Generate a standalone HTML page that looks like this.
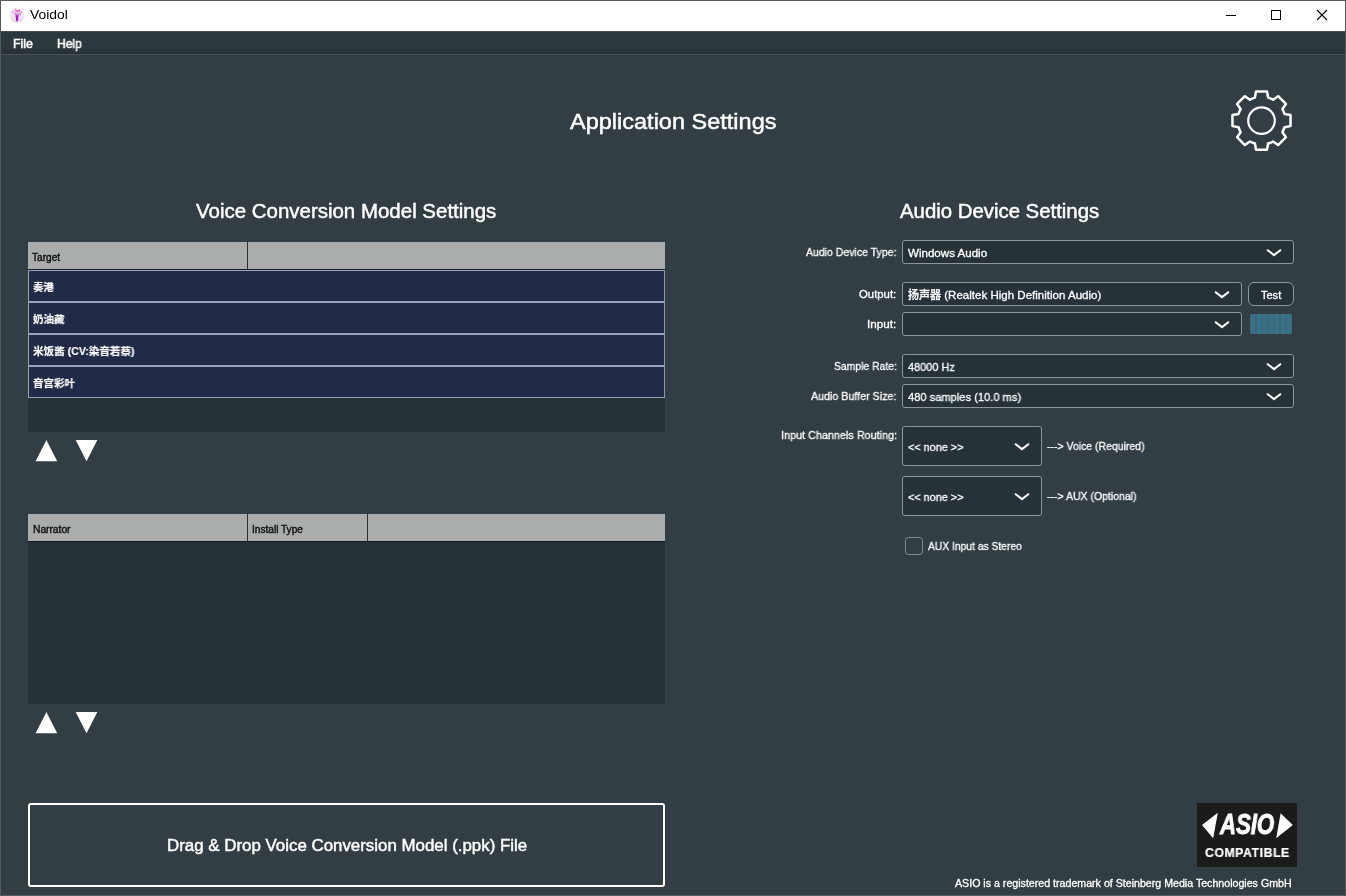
<!DOCTYPE html>
<html lang="zh"><head><meta charset="utf-8"><title>Voidol</title>
<style>
html,body{margin:0;padding:0}
body{width:1346px;height:896px;overflow:hidden;position:relative;background:#323e44;font-family:"Liberation Sans", "Noto Sans CJK SC", sans-serif;color:#fff}
.a{position:absolute;display:block}
.t{position:absolute;white-space:nowrap;line-height:1;transform-origin:0 50%;color:#fff;will-change:transform;-webkit-text-stroke:0.3px}
.combo{position:absolute;background:#263238;border:1px solid #8e989b;border-radius:3px}
.row{position:absolute;left:29px;width:635px;height:30px;background:#212a47}
.hdr{position:absolute;left:28px;width:637px;height:27px;background:#a9adad;border-bottom:1px solid #161c20}
.sep{position:absolute;width:1px;height:27px;background:#2a3236}
</style></head>
<body>
<div class="a" style="left:0;top:0;width:1346px;height:31px;background:#fff"></div>
<svg class="a" style="left:6px;top:5px" width="22" height="22" viewBox="6 5 22 22">
<defs><linearGradient id="ig" x1="0" y1="0" x2="0" y2="1"><stop offset="0" stop-color="#fdf3fc"/><stop offset="0.55" stop-color="#f1e6f1"/><stop offset="1" stop-color="#dededb"/></linearGradient></defs>
<circle cx="16.7" cy="15.3" r="7.7" fill="url(#ig)"/>
<ellipse cx="17" cy="12.2" rx="4.6" ry="3" fill="#f5b9ee" opacity="0.75"/>
<path d="M13.6 12.6 Q16.8 14.6 20.2 12.6 L18.6 15.6 L18 21 L16 21 L15.4 15.6 Z" fill="#c77be3" opacity="0.8"/>
<path d="M15.7 15.2 L18.3 15.2 L17.9 21.2 L16.2 21.2 Z" fill="#a117d8"/>
<rect x="15.8" y="10.6" width="3.6" height="1" fill="#d63db2"/>
<circle cx="15.2" cy="9.3" r="0.55" fill="#7b4a86"/><circle cx="19.6" cy="10.4" r="0.55" fill="#7b4a86"/><circle cx="21.5" cy="12.3" r="0.55" fill="#7b4a86"/><circle cx="12.4" cy="11.8" r="0.5" fill="#8d6a96"/><circle cx="20.6" cy="14.2" r="0.5" fill="#8d5a86"/>
</svg>
<svg class="a" style="left:1216px;top:5px" width="120" height="22" viewBox="0 0 120 22">
<path d="M10 10.5 H20" stroke="#000" stroke-width="1"/>
<rect x="55.5" y="5.5" width="9" height="9" fill="none" stroke="#000" stroke-width="1"/>
<path d="M101 5 L111 15 M111 5 L101 15" stroke="#000" stroke-width="1.1"/>
</svg>
<div class="a" style="left:0;top:31px;width:1346px;height:24px;background:linear-gradient(#2d383e 0,#2d383e 70%,#293338 80%,#283237 100%);box-shadow:inset 0 -1px 0 #475359,inset 0 1px 0 #424d53"></div>
<svg class="a" style="left:1221px;top:80px" width="82" height="82" viewBox="1221 80 82 82"><path d="M1254.90 97.63 L1255.99 91.57 L1267.01 91.57 L1268.10 97.63 A23.90 23.90 0 0 1 1273.08 99.69 L1278.13 96.17 L1285.93 103.97 L1282.41 109.02 A23.90 23.90 0 0 1 1284.47 114.00 L1290.53 115.09 L1290.53 126.11 L1284.47 127.20 A23.90 23.90 0 0 1 1282.41 132.18 L1285.93 137.23 L1278.13 145.03 L1273.08 141.51 A23.90 23.90 0 0 1 1268.10 143.57 L1267.01 149.63 L1255.99 149.63 L1254.90 143.57 A23.90 23.90 0 0 1 1249.92 141.51 L1244.87 145.03 L1237.07 137.23 L1240.59 132.18 A23.90 23.90 0 0 1 1238.53 127.20 L1232.47 126.11 L1232.47 115.09 L1238.53 114.00 A23.90 23.90 0 0 1 1240.59 109.02 L1237.07 103.97 L1244.87 96.17 L1249.92 99.69 A23.90 23.90 0 0 1 1254.90 97.63 Z" fill="none" stroke="#fff" stroke-width="2.5" stroke-linejoin="round"/><circle cx="1261.5" cy="120.6" r="13.3" fill="none" stroke="#fff" stroke-width="2.2"/></svg>
<div class="a" style="left:28px;top:242px;width:637px;height:190px;background:#263238"></div>
<div class="hdr" style="top:242px"></div><div class="sep" style="left:247px;top:242px"></div>
<div class="a" style="left:28px;top:270px;width:635px;height:127px;background:#9da1be;border-left:1px solid #98a1b2;border-right:1px solid #8f9aa0;border-bottom:1px solid #97a1b0"></div>
<div class="row" style="top:271px;height:30px"></div>
<div class="row" style="top:303px;height:30px"></div>
<div class="row" style="top:335px;height:30px"></div>
<div class="row" style="top:367px;height:30px"></div>
<svg class="a" style="left:30px;top:436px" width="74" height="30" viewBox="30 436 74 30"><path d="M46.4 440.0 L57.2 461.3 L35.6 461.3 Z M75.7 440.0 L97.3 440.0 L86.5 461.3 Z" fill="#fff"/></svg>
<div class="a" style="left:28px;top:514px;width:637px;height:190px;background:#263238"></div>
<div class="hdr" style="top:514px"></div><div class="sep" style="left:247px;top:514px"></div><div class="sep" style="left:367px;top:514px"></div>
<svg class="a" style="left:30px;top:708px" width="74" height="30" viewBox="30 708 74 30"><path d="M46.4 712.0 L57.2 733.3 L35.6 733.3 Z M75.7 712.0 L97.3 712.0 L86.5 733.3 Z" fill="#fff"/></svg>
<div class="a" style="left:28px;top:803px;width:633px;height:80px;border:2px solid #fff;border-radius:3px"></div>
<div class="combo" style="left:902px;top:240px;width:390px;height:22px"></div><svg class="a" style="left:1264.0px;top:246.6px" width="20" height="12" viewBox="0 0 20 12"><path d="M3.7 3.2 L10 8.1 L16.3 3.2" fill="none" stroke="#fff" stroke-width="2" stroke-linecap="round" stroke-linejoin="round"/></svg><div class="combo" style="left:902px;top:282px;width:338px;height:22px"></div><svg class="a" style="left:1212.0px;top:288.6px" width="20" height="12" viewBox="0 0 20 12"><path d="M3.7 3.2 L10 8.1 L16.3 3.2" fill="none" stroke="#fff" stroke-width="2" stroke-linecap="round" stroke-linejoin="round"/></svg><div class="combo" style="left:902px;top:312px;width:338px;height:22px"></div><svg class="a" style="left:1212.0px;top:318.6px" width="20" height="12" viewBox="0 0 20 12"><path d="M3.7 3.2 L10 8.1 L16.3 3.2" fill="none" stroke="#fff" stroke-width="2" stroke-linecap="round" stroke-linejoin="round"/></svg><div class="combo" style="left:902px;top:354px;width:390px;height:22px"></div><svg class="a" style="left:1264.0px;top:360.6px" width="20" height="12" viewBox="0 0 20 12"><path d="M3.7 3.2 L10 8.1 L16.3 3.2" fill="none" stroke="#fff" stroke-width="2" stroke-linecap="round" stroke-linejoin="round"/></svg><div class="combo" style="left:902px;top:384px;width:390px;height:22px"></div><svg class="a" style="left:1264.0px;top:390.6px" width="20" height="12" viewBox="0 0 20 12"><path d="M3.7 3.2 L10 8.1 L16.3 3.2" fill="none" stroke="#fff" stroke-width="2" stroke-linecap="round" stroke-linejoin="round"/></svg><div class="combo" style="left:902px;top:426px;width:138px;height:38px"></div><svg class="a" style="left:1012.0px;top:440.6px" width="20" height="12" viewBox="0 0 20 12"><path d="M3.7 3.2 L10 8.1 L16.3 3.2" fill="none" stroke="#fff" stroke-width="2" stroke-linecap="round" stroke-linejoin="round"/></svg><div class="combo" style="left:902px;top:476px;width:138px;height:38px"></div><svg class="a" style="left:1012.0px;top:490.6px" width="20" height="12" viewBox="0 0 20 12"><path d="M3.7 3.2 L10 8.1 L16.3 3.2" fill="none" stroke="#fff" stroke-width="2" stroke-linecap="round" stroke-linejoin="round"/></svg><div class="a" style="left:1248px;top:282px;width:44px;height:22px;background:#263238;border:1px solid #8e989b;border-radius:6px"></div>
<div class="a" style="left:1250px;top:314px;width:42px;height:20px;background:repeating-linear-gradient(90deg,#33606f 0,#3a7086 0.8px,#3a7086 5.2px,#33606f 6px)"></div>
<div class="a" style="left:905px;top:537px;width:16px;height:16px;border:1px solid #7f8b90;border-radius:3.5px"></div>
<div class="a" style="left:1197px;top:803px;width:100px;height:64px;background:#1b1b1b"></div>
<svg class="a" style="left:1197px;top:803px" width="100" height="64" viewBox="1197 803 100 64"><path d="M1202 825 L1217.8 812.8 L1213.2 838.2 Z M1292.8 825 L1280.6 813.2 L1276.2 838.2 Z" fill="#fff"/></svg>
<div class="t" id="title" style="left:29.80px;top:9.43px;font-size:12.60px;transform:scaleX(1.1011);color:#000;-webkit-text-stroke:0">Voidol</div>
<div class="t" id="mfile" style="left:13.00px;top:37.70px;font-size:12.40px;transform:scaleX(0.9765);-webkit-text-stroke:0.5px">File</div>
<div class="t" id="mhelp" style="left:57.40px;top:37.70px;font-size:12.40px;transform:scaleX(0.9771);-webkit-text-stroke:0.5px">Help</div>
<div class="t" id="h1" style="left:570.30px;top:111.25px;font-size:21.80px;transform:scaleX(1.0786);-webkit-text-stroke:0.45px">Application Settings</div>
<div class="t" id="h2" style="left:196.00px;top:201.74px;font-size:19.80px;transform:scaleX(1.0345);-webkit-text-stroke:0.45px">Voice Conversion Model Settings</div>
<div class="t" id="h3" style="left:900.30px;top:201.74px;font-size:19.80px;transform:scaleX(1.0293);-webkit-text-stroke:0.45px">Audio Device Settings</div>
<div class="t" id="th1" style="left:32.30px;top:252.65px;font-size:10.10px;transform:scaleX(0.9978);color:#111;-webkit-text-stroke:0.4px">Target</div>
<div class="t" id="th2" style="left:32.50px;top:524.55px;font-size:10.10px;transform:scaleX(1.0127);color:#111;-webkit-text-stroke:0.4px">Narrator</div>
<div class="t" id="th3" style="left:252.40px;top:524.55px;font-size:10.10px;transform:scaleX(0.9985);color:#111;-webkit-text-stroke:0.4px">Install Type</div>
<div class="t" id="r1" style="left:33.30px;top:282.33px;font-size:10.60px;transform:scaleX(0.9817);font-weight:bold;-webkit-text-stroke:0.15px">奏港</div>
<div class="t" id="r2" style="left:33.30px;top:314.33px;font-size:10.60px;transform:scaleX(0.9880);font-weight:bold;-webkit-text-stroke:0.15px">奶油藏</div>
<div class="t" id="r3" style="left:33.30px;top:346.33px;font-size:10.60px;transform:scaleX(0.9968);font-weight:bold;-webkit-text-stroke:0.15px">米饭酱 (CV:染音若蔡)</div>
<div class="t" id="r4" style="left:33.30px;top:378.33px;font-size:10.60px;transform:scaleX(0.9912);font-weight:bold;-webkit-text-stroke:0.15px">音宫彩叶</div>
<div class="t" id="drop" style="left:166.80px;top:837.75px;font-size:16.60px;transform:scaleX(1.0171);-webkit-text-stroke:0.45px">Drag &amp; Drop Voice Conversion Model (.ppk) File</div>
<div class="t" id="l1" style="left:806.20px;top:247.43px;font-size:11.30px;transform:scaleX(0.9306);">Audio Device Type:</div>
<div class="t" id="l2" style="left:859.40px;top:289.43px;font-size:11.30px;transform:scaleX(1.0037);">Output:</div>
<div class="t" id="l3" style="left:867.40px;top:319.23px;font-size:11.30px;transform:scaleX(1.0331);">Input:</div>
<div class="t" id="l4" style="left:833.70px;top:361.43px;font-size:11.30px;transform:scaleX(0.9189);">Sample Rate:</div>
<div class="t" id="l5" style="left:811.20px;top:391.23px;font-size:11.30px;transform:scaleX(0.9464);">Audio Buffer Size:</div>
<div class="t" id="l6" style="left:780.50px;top:429.93px;font-size:11.30px;transform:scaleX(0.9578);">Input Channels Routing:</div>
<div class="t" id="c1" style="left:908.20px;top:247.93px;font-size:11.30px;transform:scaleX(1.0239);">Windows Audio</div>
<div class="t" id="c2" style="left:908.20px;top:289.93px;font-size:11.30px;transform:scaleX(1.0207);"><span style="font-size:10.8px;font-weight:500">扬声器</span> (Realtek High Definition Audio)</div>
<div class="t" id="c4" style="left:908.20px;top:361.93px;font-size:11.30px;transform:scaleX(0.9678);">48000 Hz</div>
<div class="t" id="c5" style="left:908.20px;top:391.93px;font-size:11.30px;transform:scaleX(0.9843);">480 samples (10.0 ms)</div>
<div class="t" id="c6" style="left:908.20px;top:442.03px;font-size:11.30px;transform:scaleX(0.9600);">&lt;&lt; none &gt;&gt;</div>
<div class="t" id="c7" style="left:908.20px;top:492.03px;font-size:11.30px;transform:scaleX(0.9600);">&lt;&lt; none &gt;&gt;</div>
<div class="t" id="test" style="left:1261.40px;top:290.29px;font-size:11.00px;transform:scaleX(1.0006);">Test</div>
<div class="t" id="v1" style="left:1047.20px;top:440.93px;font-size:11.30px;transform:scaleX(0.9280);">---&gt; Voice (Required)</div>
<div class="t" id="v2" style="left:1047.20px;top:490.93px;font-size:11.30px;transform:scaleX(0.9297);">---&gt; AUX (Optional)</div>
<div class="t" id="cb" style="left:927.90px;top:540.93px;font-size:11.30px;transform:scaleX(0.9107);">AUX Input as Stereo</div>
<div class="t" id="ft" style="left:954.90px;top:878.90px;font-size:10.40px;transform:scaleX(1.0231);">ASIO is a registered trademark of Steinberg Media Technologies GmbH</div>
<div class="t" id="asio" style="left:1219.80px;top:810.45px;font-size:29.00px;transform:scaleX(0.7644);font-weight:bold;font-style:italic;-webkit-text-stroke:0.9px">ASIO</div>
<div class="t" id="compat" style="left:1204.80px;top:847.38px;font-size:12.90px;transform:scaleX(0.9495);font-weight:bold;letter-spacing:0.6px;-webkit-text-stroke:0.2px">COMPATIBLE</div>
<div class="a" style="left:0;top:0;width:1344px;height:894px;border:1px solid #565a5c;pointer-events:none"></div>
</body></html>
